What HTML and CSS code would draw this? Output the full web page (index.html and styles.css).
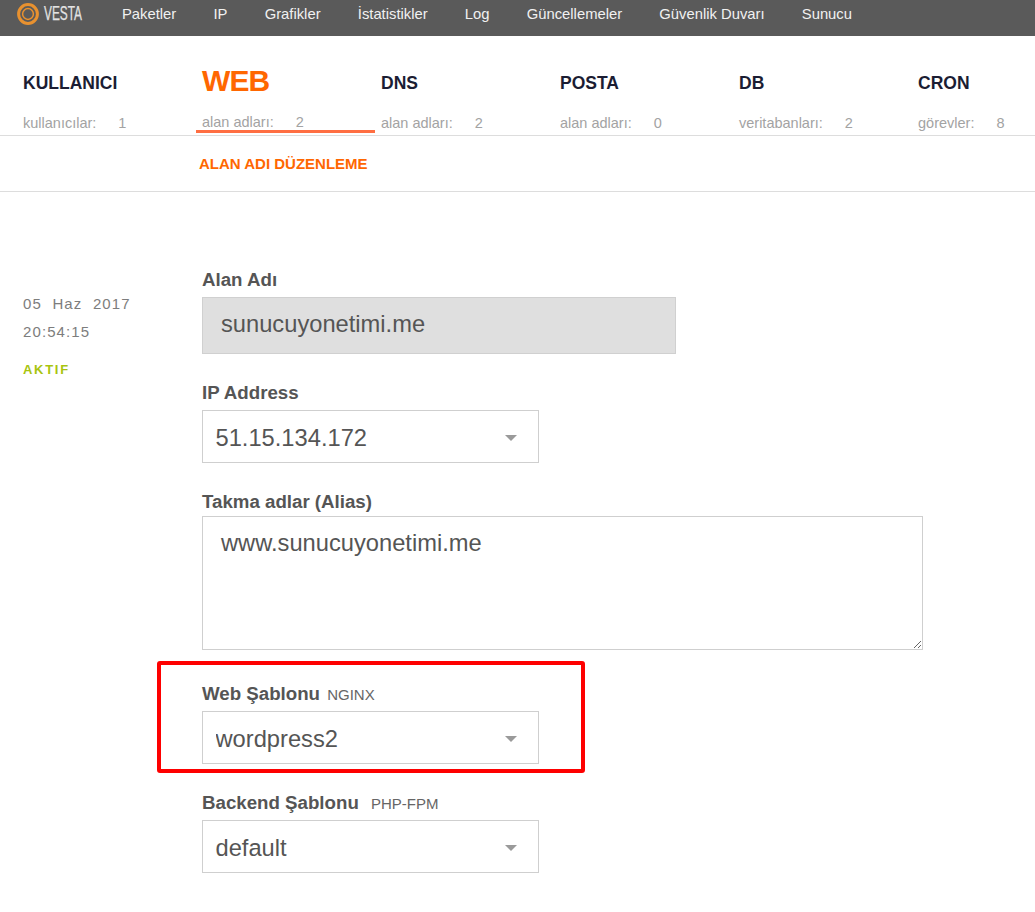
FILE: index.html
```html
<!DOCTYPE html>
<html lang="tr">
<head>
<meta charset="utf-8">
<title>Vesta</title>
<link rel="stylesheet" href="styles.css">
</head>
<body>
<header class="topbar">
  <a class="logo" href="#">
    <svg width="100" height="28" viewBox="0 0 100 28">
      <circle cx="11" cy="14" r="9.4" fill="none" stroke="#e8912f" stroke-width="3"/>
      <circle cx="11" cy="14" r="5.4" fill="none" stroke="#e8912f" stroke-width="1.5"/>
      <text x="27" y="20" class="logo-text" textLength="38" lengthAdjust="spacingAndGlyphs">VESTA</text>
    </svg>
  </a>
  <nav class="topnav">
    <a href="#">Paketler</a>
    <a href="#">IP</a>
    <a href="#">Grafikler</a>
    <a href="#">İstatistikler</a>
    <a href="#">Log</a>
    <a href="#">Güncellemeler</a>
    <a href="#">Güvenlik Duvarı</a>
    <a href="#">Sunucu</a>
  </nav>
</header>

<section class="tabs">
  <div class="tab"><div class="tab-title">KULLANICI</div><div class="tab-stat"><span>kullanıcılar:</span><span>1</span></div></div>
  <div class="tab active"><div class="tab-title">WEB</div><div class="tab-stat"><span>alan adları:</span><span>2</span></div></div>
  <div class="tab"><div class="tab-title">DNS</div><div class="tab-stat"><span>alan adları:</span><span>2</span></div></div>
  <div class="tab"><div class="tab-title">POSTA</div><div class="tab-stat"><span>alan adları:</span><span>0</span></div></div>
  <div class="tab"><div class="tab-title">DB</div><div class="tab-stat"><span>veritabanları:</span><span>2</span></div></div>
  <div class="tab"><div class="tab-title">CRON</div><div class="tab-stat"><span>görevler:</span><span>8</span></div></div>
</section>

<div class="subbar">ALAN ADI DÜZENLEME</div>

<main class="content">
  <aside class="meta">
    <div class="meta-line">05 &nbsp;Haz &nbsp;2017</div>
    <div class="meta-line">20:54:15</div>
    <div class="status">AKTIF</div>
  </aside>
  <form class="form">
    <div class="field field-domain">
      <label class="label">Alan Adı</label>
      <input class="input" type="text" value="sunucuyonetimi.me" disabled>
    </div>
    <div class="field field-ip">
      <label class="label">IP Address</label>
      <div class="select-wrap"><select class="select"><option>51.15.134.172</option></select></div>
    </div>
    <div class="field field-alias">
      <label class="label">Takma adlar (Alias)</label>
      <textarea class="textarea">www.sunucuyonetimi.me</textarea>
    </div>
    <div class="field field-web">
      <label class="label">Web Şablonu <span class="hint">NGINX</span></label>
      <div class="select-wrap"><select class="select"><option>wordpress2</option></select></div>
      <div class="highlight"></div>
    </div>
    <div class="field">
      <label class="label">Backend Şablonu <span class="hint hint-wide">PHP-FPM</span></label>
      <div class="select-wrap"><select class="select"><option>default</option></select></div>
    </div>
  </form>
</main>
</body>
</html>
```
FILE: styles.css
```css
* { box-sizing: border-box; }
html, body { margin: 0; padding: 0; background: #fff; }
body { font-family: "Liberation Sans", Arial, sans-serif; color: #555; height: 912px; overflow: hidden; }
a { text-decoration: none; color: inherit; }

.topbar { display: flex; align-items: flex-start; height: 36px; background: #5a5a5a; }
.logo { display: block; flex: none; width: 122px; padding: 0 0 0 17px; height: 28px; }
.logo svg { display: block; }
.logo-text { font-family: "Liberation Sans", sans-serif; font-size: 20px; fill: #e3e3e3; stroke: #e3e3e3; stroke-width: 0.25px; }
.topnav { display: flex; gap: 37.2px; font-size: 14.8px; line-height: 28px; color: #f1f1f1; }

.tabs { display: flex; height: 100px; padding-left: 17px; border-bottom: 1px solid #ddd; }
.tab { position: relative; flex: none; width: 179px; padding-left: 6px; }
.tab:last-child { flex: 1 1 0; width: auto; min-width: 0; }
.tab-title { height: 72px; padding-top: 37px; font-size: 17.5px; line-height: 20px; font-weight: 700; color: #1b1d33; }
.tab-stat { display: flex; gap: 22px; font-size: 14.5px; line-height: 18px; color: #a3a3a3; margin-top: 6px; }
.tab.active .tab-title { padding-top: 28px; font-size: 30px; line-height: 34px; letter-spacing: -0.9px; color: #ff6701; }
.tab.active .tab-stat { margin-top: 5px; }
.tab.active::after { content: ""; position: absolute; left: 0; width: 179px; top: 94px; height: 3px; background: #ff6e42; }

.subbar { height: 56px; padding: 19px 0 0 199px; font-size: 15px; line-height: 18px; font-weight: 700; color: #ff6701; border-bottom: 1px solid #ddd; }

.content { display: flex; padding: 76px 0 0 23px; }
.meta { flex: none; width: 179px; padding-top: 22px; font-size: 15px; color: #7d7d7d; letter-spacing: 1.1px; }
.meta-line { height: 28px; line-height: 28px; }
.status { margin-top: 16px; font-size: 13px; line-height: 16px; font-weight: 700; letter-spacing: 1.7px; color: #a8c40f; }

.form { display: flex; flex-direction: column; }
.field { position: relative; display: flex; flex-direction: column; }
.label { font-size: 18.7px; line-height: 24px; font-weight: 700; color: #555; height: 29px; }
.hint { font-size: 15px; font-weight: 400; margin-left: 2px; color: #666; }
.hint-wide { margin-left: 7px; }

.input { width: 474px; height: 57px; padding: 0 18px 3px; border: 1px solid #d0d0d0; background: #dfdfdf; color: #555; font: 400 23.7px "Liberation Sans", sans-serif; opacity: 1; }
.field-domain { margin-bottom: 27px; }
.field-ip { margin-bottom: 27px; }
.field-alias { margin-bottom: 32px; }
.field-alias .label { margin-bottom: -3px; }
.field-web { margin-bottom: 27px; }

.select-wrap { position: relative; width: 337px; height: 53px; }
.select-wrap::after { content: ""; position: absolute; right: 22px; top: 25px; border-left: 6.5px solid transparent; border-right: 6.5px solid transparent; border-top: 6.5px solid #9a9a9a; pointer-events: none; }
.select { display: block; width: 100%; height: 100%; padding: 2px 12.5px 0; border: 1px solid #cfcfcf; border-radius: 0; background: #fff; color: #555; font: 400 23.7px "Liberation Sans", sans-serif; appearance: none; -webkit-appearance: none; }

.textarea { display: block; width: 721px; height: 134px; padding: 13px 18px; border: 1px solid #cfcfcf; border-radius: 0; color: #555; font: 400 23.7px/26px "Liberation Sans", sans-serif; }

.highlight { position: absolute; left: -45px; top: -21px; width: 428px; height: 112px; border: 4px solid #fe0000; border-radius: 3px; pointer-events: none; }
```
